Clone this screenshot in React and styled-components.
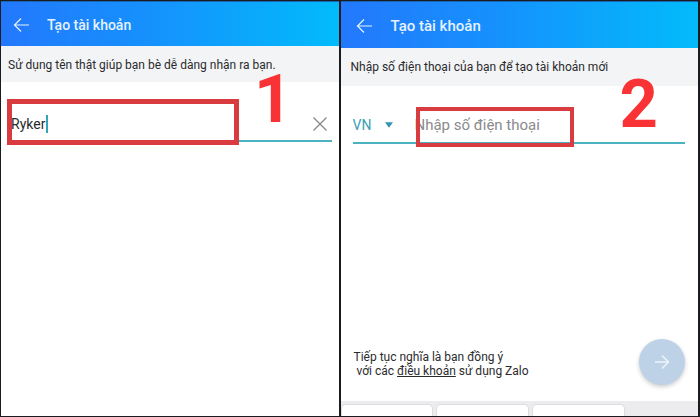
import React from "react";
import styled, { createGlobalStyle } from "styled-components";

const GlobalStyle = createGlobalStyle`
  * { box-sizing: border-box; }
  body { margin: 0; background: #fff; font-family: Roboto, "Noto Sans", sans-serif; color: #2b2b2d; }
  button, input, select { font: inherit; color: inherit; margin: 0; padding: 0; border: 0; background: none; border-radius: 0; }
`;

const Page = styled.main`
  display: grid;
  grid-template-columns: 338fr 358fr;
  gap: 2px;
  min-height: 100vh;
  background: #1b1b1f;
  border: 1px solid #1b1b1f;
  border-right-width: 2px;
`;

const Screen = styled.section`
  display: flex;
  flex-direction: column;
  min-width: 0;
  background: #fff;
`;

const Header = styled.header`
  display: flex;
  align-items: center;
  gap: ${(p) => (p.$large ? 18 : 17)}px;
  height: ${(p) => (p.$large ? 47 : 45)}px;
  padding: 1px ${(p) => (p.$large ? 15 : 12)}px 0;
  background: linear-gradient(90deg, #2378fc 0%, #1592fd 45%, #02bbfa 100%);
  border-top: 1px solid #1766b4;
  color: #e6f2ff;
`;

const IconButton = styled.button`
  display: flex;
  flex: none;
  cursor: pointer;
`;

const Title = styled.h1`
  margin: 0;
  font-size: ${(p) => (p.$large ? 15 : 14)}px;
  line-height: 20px;
  font-weight: 500;
`;

const Notice = styled.p`
  margin: 0;
  padding: ${(p) => (p.$large ? "10px 10px 10px" : "10px 7px 8px")};
  background: #f3f4f6;
  font-size: 12px;
  line-height: 18px;
`;

const Field = styled.div`
  position: relative;
  display: flex;
  align-items: center;
  height: ${(p) => (p.$large ? 36 : 35)}px;
  margin: ${(p) => (p.$large ? "22px 13px 0 12px" : "25px 7px 0 6px")};
  padding-left: ${(p) => (p.$large ? 0 : 4)}px;
  border-bottom: 2px solid #4cb1c0;
`;

const TextInput = styled.input`
  min-width: 0;
  flex: ${(p) => (p.$fit ? "0 0 auto" : 1)};
  width: ${(p) => (p.$fit ? "35px" : "auto")};
  font-size: ${(p) => (p.$fit ? 14 : 15)}px;
  line-height: 20px;
  outline: none;
  &::placeholder { color: #8a8a8d; opacity: 1; }
`;

const Cursor = styled.span`
  width: 2px;
  height: 18px;
  background: #35a3b8;
`;

const ClearButton = styled(IconButton)`
  margin-left: auto;
  padding: 0 5px;
`;

const CountryPicker = styled.label`
  display: flex;
  align-items: center;
  gap: 10px;
  width: 62px;
  color: #3b9db4;
`;

const CountrySelect = styled.select`
  appearance: none;
  width: 22px;
  font-size: 14px;
  line-height: 20px;
`;

const Highlight = styled.span`
  position: absolute;
  top: ${(p) => p.$top}px;
  bottom: -5px;
  left: ${(p) => p.$left};
  width: ${(p) => p.$width};
  border: ${(p) => p.$weight}px solid #d93c3f;
  pointer-events: none;
`;

const StepNumber = styled.strong`
  position: absolute;
  top: ${(p) => p.$top}px;
  right: ${(p) => p.$right}px;
  color: #f93335;
  font-size: 67px;
  line-height: 56px;
  font-weight: 700;
  pointer-events: none;
`;

const Footer = styled.footer`
  display: flex;
  align-items: center;
  justify-content: space-between;
  margin-top: auto;
  padding: 0 13px 16px 13px;
`;

const Terms = styled.p`
  margin: 4px 0 0;
  font-size: 12px;
  line-height: 14px;
  a { color: inherit; text-decoration: underline; }
`;

const TermsLine = styled.span`
  display: block;
  padding-left: ${(p) => (p.$indent ? 3 : 0)}px;
`;

const NextButton = styled.button`
  display: grid;
  place-items: center;
  width: 46px;
  height: 46px;
  border-radius: 50%;
  background: #bdd2e6;
  box-shadow: 0 2px 4px #0003;
  color: #edf5fb;
  cursor: pointer;
`;

const Keyboard = styled.div`
  display: grid;
  grid-template-columns: repeat(3, 91fr) 69fr;
  gap: 5px;
  height: 15px;
  padding: 4px 0 0 1px;
  background: #ececef;
  overflow: hidden;
`;

const Key = styled.button`
  height: 24px;
  border-radius: 4px;
  background: #fff;
  box-shadow: 0 0 0 1px #dddde2;
`;

const BackIcon = () => (
  <svg width="17" height="16" viewBox="0 0 17 16" fill="none" stroke="currentColor" strokeWidth="1.2" aria-hidden="true">
    <path d="M16 8H1.5M8 1.5L1.5 8L8 14.5" />
  </svg>
);

const CloseIcon = () => (
  <svg width="14" height="14" viewBox="0 0 14 14" fill="none" stroke="#88888b" strokeWidth="1.3" aria-hidden="true">
    <path d="M0.5 0.5L13.5 13.5M13.5 0.5L0.5 13.5" />
  </svg>
);

const CaretIcon = () => (
  <svg width="8" height="6" viewBox="0 0 8 6" aria-hidden="true">
    <path d="M0 0.2H8L4 5.8Z" fill="#3296ae" />
  </svg>
);

const ArrowIcon = () => (
  <svg width="16" height="16" viewBox="0 0 16 16" fill="none" stroke="currentColor" strokeWidth="1.5" aria-hidden="true">
    <path d="M1 8H14.5M8 1.5L14.5 8L8 14.5" />
  </svg>
);

function ScreenHeader({ large }) {
  return (
    <Header $large={large}>
      <IconButton type="button" aria-label="Quay lại"><BackIcon /></IconButton>
      <Title $large={large}>Tạo tài khoản</Title>
    </Header>
  );
}

export default function App() {
  return (
    <>
      <GlobalStyle />
      <Page>
        <Screen>
          <ScreenHeader />
          <Notice>Sử dụng tên thật giúp bạn bè dễ dàng nhận ra bạn.</Notice>
          <Field>
            <TextInput $fit aria-label="Tên" defaultValue="Ryker" />
            <Cursor />
            <ClearButton type="button" aria-label="Xóa"><CloseIcon /></ClearButton>
            <Highlight $top={-8} $left="0" $width="calc(72% - 2px)" $weight={5} />
            <StepNumber $top={-36} $right={39}>1</StepNumber>
          </Field>
        </Screen>
        <Screen>
          <ScreenHeader large />
          <Notice $large>Nhập số điện thoại của bạn để tạo tài khoản mới</Notice>
          <Field $large>
            <CountryPicker>
              <CountrySelect aria-label="Quốc gia" defaultValue="VN">
                <option>VN</option>
              </CountrySelect>
              <CaretIcon />
            </CountryPicker>
            <TextInput type="tel" aria-label="Số điện thoại" placeholder="Nhập số điện thoại" />
            <Highlight $top={-1} $left="63px" $width="158px" $weight={4} />
            <StepNumber $top={-32} $right={27}>2</StepNumber>
          </Field>
          <Footer>
            <Terms>
              <TermsLine>Tiếp tục nghĩa là bạn đồng ý</TermsLine>
              <TermsLine $indent>với các <a href="#terms">điều khoản</a> sử dụng Zalo</TermsLine>
            </Terms>
            <NextButton type="button" aria-label="Tiếp tục"><ArrowIcon /></NextButton>
          </Footer>
          <Keyboard>
            <Key type="button" aria-label="1" />
            <Key type="button" aria-label="2" />
            <Key type="button" aria-label="3" />
          </Keyboard>
        </Screen>
      </Page>
    </>
  );
}
